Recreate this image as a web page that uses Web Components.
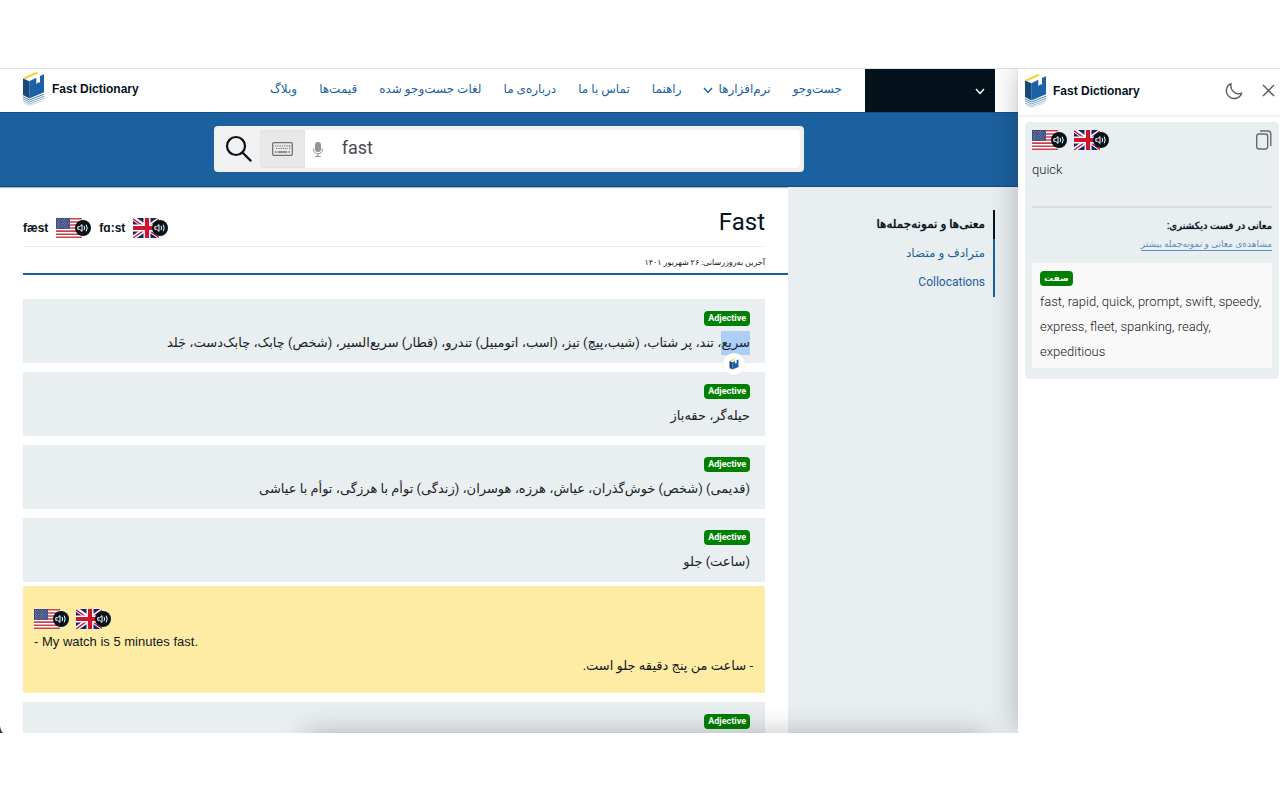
<!DOCTYPE html>
<html lang="fa">
<head>
<meta charset="utf-8">
<title>Fast Dictionary</title>
<style>
  body {
    margin: 0;
    box-sizing: border-box;
    height: 100vh;
    padding: 68px 0 67px;
    background: #fff;
    color: #06121c;
    font: 13px/24px Roboto, "DejaVu Sans", sans-serif;
  }
</style>
</head>
<body>
<dictionary-app>
  <site-header slot="header"></site-header>
  <search-bar slot="search" value="fast"></search-bar>

  <word-heading slot="article" word="Fast" us="fæst" uk="fɑ:st">آخرین به‌روزرسانی: ۲۶ شهریور ۱۴۰۱</word-heading>
  <meaning-card slot="article" kind="Adjective"><picked-text>سریع</picked-text>، تند، پر شتاب، (شیب،پیچ) تیز، (اسب، اتومبیل) تندرو، (قطار) سریع‌السیر، (شخص) چابک، چابک‌دست، جَلد</meaning-card>
  <meaning-card slot="article" kind="Adjective">حیله‌گر، حقه‌باز</meaning-card>
  <meaning-card slot="article" kind="Adjective">(قدیمی) (شخص) خوش‌گذران، عیاش، هرزه، هوسران، (زندگی) توأم با هرزگی، توأم با عیاشی</meaning-card>
  <meaning-card slot="article" kind="Adjective">(ساعت) جلو</meaning-card>
  <example-card slot="article">
    <span slot="en">- My watch is 5 minutes fast.</span>
    <span slot="fa">- ساعت من پنج دقیقه جلو است.</span>
  </example-card>
  <meaning-card slot="article" kind="Adjective"></meaning-card>

  <page-index slot="index"></page-index>
  <side-panel slot="panel">
    <span slot="word">quick</span>
    <span slot="meanings">fast, rapid, quick, prompt, swift, speedy, express, fleet, spanking, ready, expeditious</span>
  </side-panel>
</dictionary-app>

<script>
// small helper so every element attaches its shadow the same way
class BaseElement extends HTMLElement {
  constructor() {
    super();
    this.attachShadow({ mode: 'open' });
  }
  connectedCallback() {
    this.shadowRoot.innerHTML = this.render();
  }
}

// book logo
class BookLogo extends BaseElement {
  render() {
    return `
      <style>
        :host { display: block; width: 21px; flex: none; }
        svg { display: block; width: 100%; }
      </style>
      <svg viewBox="0 0 21 34" aria-hidden="true">
        <path fill="#f7cf1d" d="M0 6L13 0L15 1.2L2 7.2Z"/>
        <path fill="#174a7c" d="M0 6.6L6.4 9.2V26.4L0 23Z"/>
        <path fill="#1b61a4" d="M6.3 9.2L13.3 5.8V12.2L15.2 10.2L17 10.8V4L21 2.2V20.3L6.3 26.4Z"/>
        <g fill="none" stroke-width=".9">
          <path stroke="#2f6dab" d="M0 24.8L6.4 28L21 22.2"/>
          <path stroke="#5d8fc0" d="M0 26.8L6.4 30L21 24.3"/>
          <path stroke="#8fb1d3" d="M0 28.8L6.4 31.8L21 26.4"/>
          <path stroke="#c2d4e6" d="M1 31L6.4 33.4L20 28.6"/>
        </g>
      </svg>`;
  }
}

class FlagButton extends BaseElement {
  render() {
    const us = `
      <rect width="26" height="20" fill="#fff"/>
      <path stroke="#c9414c" stroke-width="1.55" d="M0 .8H26M0 3.9H26M0 6.95H26M0 10H26M0 13.1H26M0 16.2H26M0 19.2H26"/>
      <rect width="14" height="10.8" fill="#3c4a80"/>
      <g stroke="#a9b0cb" stroke-width=".8" stroke-dasharray=".8 1.6">
        <path d="M1 1.6H13.4M1 4.2H13.4M1 6.8H13.4M1 9.3H13.4"/>
        <path d="M2.2 2.9H12.6M2.2 5.5H12.6M2.2 8H12.6"/>
      </g>`;
    const uk = `
      <rect width="26" height="20" fill="#14246c"/>
      <path stroke="#fff" stroke-width="4.4" d="M0 0L28 20M28 0L0 20"/>
      <path stroke="#cf1430" stroke-width="1.4" d="M0 .8L28 20.8M28 0L0 20"/>
      <path stroke="#fff" stroke-width="7" d="M14 0V20M0 10H26"/>
      <path stroke="#cf1430" stroke-width="4.2" d="M14 0V20M0 10H26"/>`;
    const country = this.getAttribute('country');
    return `
      <style>
        :host { display: block; }
        button { display: block; padding: 0; border: 0; background: none; cursor: pointer; }
        svg { display: block; }
      </style>
      <button type="button" aria-label="${country.toUpperCase()}">
        <svg width="35" height="20" viewBox="0 0 35 20">
          <svg width="26" height="20">${country === 'us' ? us : uk}</svg>
          <circle cx="27" cy="10" r="8" fill="#06121c"/>
          <g fill="none" stroke="#fff" stroke-linecap="round" stroke-linejoin="round">
            <path d="M22.2 8.7H23.6L26 6.6V13.4L23.6 11.3H22.2Z"/>
            <path d="M28.2 8.2Q29.2 10 28.2 11.8M30.4 7Q32.2 10 30.4 13"/>
          </g>
        </svg>
      </button>`;
  }
}

class WordBadge extends BaseElement {
  render() {
    return `
      <style>
        :host {
          display: block;
          width: fit-content;
          padding: 0 4px;
          border-radius: 4px;
          background: #008000;
          color: #fff;
          font-size: 9px;
          font-weight: 700;
          line-height: 15px;
        }
      </style>
      <slot></slot>`;
  }
}

class SiteHeader extends BaseElement {
  render() {
    return `
      <style>
        :host {
          display: flex;
          align-items: stretch;
          height: 43px;
          padding: 0 23px;
          border-top: 1px solid #e3e4e5;
          background: #fff;
        }
        .brand {
          display: flex;
          align-items: center;
          gap: 8px;
          margin-right: auto;
          padding-bottom: 4px;
          font: 700 12px "Liberation Sans", sans-serif;
          color: #06121c;
          text-decoration: none;
        }
        nav {
          display: flex;
          align-items: center;
          gap: 22px;
          padding: 0 23px 3px;
          direction: rtl;
          font-size: 12px;
          white-space: nowrap;
        }
        nav a { color: #1b5f9e; text-decoration: none; }
        nav svg { margin-right: 5px; vertical-align: -1px; }
        .account {
          display: flex;
          align-items: center;
          justify-content: flex-end;
          width: 130px;
          padding: 2px 10px 0;
          border: 0;
          background: #04121c;
        }
      </style>
      <a class="brand" href="#"><book-logo></book-logo>Fast Dictionary</a>
      <nav>
        <a href="#">جست‌وجو</a>
        <a href="#">نرم‌افزارها<svg width="10" height="7" viewBox="0 0 10 7" fill="none" stroke="#1b5f9e" stroke-width="1.4"><path d="M1 1L5 5.4L9 1"/></svg></a>
        <a href="#">راهنما</a>
        <a href="#">تماس با ما</a>
        <a href="#">درباره‌ی ما</a>
        <a href="#">لغات جست‌وجو شده</a>
        <a href="#">قیمت‌ها</a>
        <a href="#">وبلاگ</a>
      </nav>
      <button class="account" type="button" aria-label="حساب">
        <svg width="10" height="7" viewBox="0 0 10 7" fill="none" stroke="#fff" stroke-width="1.4"><path d="M1 1L5 5.4L9 1"/></svg>
      </button>`;
  }
}

class SearchBar extends BaseElement {
  render() {
    return `
      <style>
        :host {
          display: flex;
          justify-content: center;
          padding: 13px 0 14px;
          background: #1b609f;
          border-top: 1px solid #164f8a;
          border-bottom: 1px solid #0f4c89;
          box-shadow: 0 1px 1px #9fbbd6;
        }
        form {
          display: flex;
          box-sizing: border-box;
          width: 58%;
          height: 46px;
          padding: 4px;
          border-radius: 4px;
          background: #f1f1f1;
        }
        button {
          display: flex;
          align-items: center;
          justify-content: center;
          padding: 0;
          border: 0;
          background: none;
        }
        .go { width: 42px; padding-left: 1px; }
        .keys {
          width: 45px;
          border: 1px solid #e2e2e2;
          border-radius: 4px 0 0 4px;
          background: #e8e8e8;
          box-sizing: border-box;
        }
        .field {
          display: flex;
          flex: 1;
          background: #fff;
          border-radius: 0 4px 4px 0;
        }
        .mic { width: 26px; }
        input {
          flex: 1;
          min-width: 0;
          padding: 0 11px 3px;
          border: 0;
          outline: 0;
          background: none;
          color: #484b4e;
          font: 18px Roboto, "DejaVu Sans", sans-serif;
        }
      </style>
      <form>
        <button class="go" type="button" aria-label="جست‌وجو">
          <svg width="28" height="28" viewBox="0 0 28 28" fill="none" stroke="#06121c" stroke-width="2.2" stroke-linecap="round"><circle cx="11" cy="11" r="9"/><path d="M17.5 17.5L25.6 25.6"/></svg>
        </button>
        <button class="keys" type="button" aria-label="صفحه کلید">
          <svg width="21" height="14" viewBox="0 0 21 14" fill="none" stroke="#737373"><rect x=".7" y=".7" width="19.6" height="12.6" rx="1" stroke-width="1.3"/><path stroke-dasharray="1.3 1" d="M3 4H18"/><path stroke-dasharray="1.3 1" d="M4 6.5H16M17.8 3.5V7.5"/><path d="M3 10H4.5M5.6 10H15.2M16.5 10H18" stroke-width="1.3"/></svg>
        </button>
        <div class="field">
          <button class="mic" type="button" aria-label="میکروفون">
            <svg width="10" height="15" viewBox="0 0 10 15" fill="none" stroke="#929292"><rect x="2" y="0" width="6" height="10" rx="3" fill="#929292" stroke="none"/><path d="M.6 6.5V8C.6 13 9.4 13 9.4 8V6.5M5 11.5V14.4M2 14.4H8"/></svg>
          </button>
          <input type="text" aria-label="fast" value="${this.getAttribute('value')}">
        </div>
      </form>`;
  }
}

class WordHeading extends BaseElement {
  render() {
    return `
      <style>
        :host {
          display: block;
          margin-bottom: 24px;
          border-bottom: 2px solid #1b5f9e;
        }
        .top {
          display: flex;
          align-items: center;
          gap: 8px;
          height: 60px;
          margin-right: 23px;
          border-bottom: 1px solid #eceeef;
          font: 700 12px "Liberation Sans", sans-serif;
          box-sizing: border-box;
        }
        .sound { display: flex; align-items: center; gap: 8px; padding-top: 22px; }
        h1 {
          margin: 0 0 0 auto;
          padding-top: 11px;
          font: 400 24px/32px Roboto, sans-serif;
        }
        p {
          margin: 0 23px 0 0;
          padding: 5px 0 0;
          direction: rtl;
          font-size: 8px;
          line-height: 21px;
        }
      </style>
      <div class="top">
        <div class="sound">${this.getAttribute('us')}<flag-button country="us"></flag-button></div>
        <div class="sound">${this.getAttribute('uk')}<flag-button country="uk"></flag-button></div>
        <h1>${this.getAttribute('word')}</h1>
      </div>
      <p><slot></slot></p>`;
  }
}

class MeaningCard extends BaseElement {
  render() {
    return `
      <style>
        :host {
          display: block;
          box-sizing: border-box;
          min-height: 64px;
          margin: 0 23px 9px 0;
          padding: 12px 15px 8px;
          background: #e9eef1;
          direction: rtl;
          font-size: 13px;
          color: #1c2226;
        }
        p { margin: 5px 0 0; line-height: 24px; }
      </style>
      <word-badge>${this.getAttribute('kind')}</word-badge>
      <p><slot></slot></p>`;
  }
}

// selected word with the floating lookup bubble under it
class PickedText extends BaseElement {
  render() {
    return `
      <style>
        :host { position: relative; display: inline-block; background: #accef7; }
        button {
          position: absolute;
          top: 22px;
          left: 2px;
          display: flex;
          align-items: center;
          justify-content: center;
          width: 22px;
          height: 22px;
          padding: 0;
          border: 0;
          border-radius: 50%;
          background: #fff;
          box-shadow: 0 0 2px rgba(0, 0, 0, .12);
        }
      </style>
      <slot></slot><button type="button" aria-label="Fast Dictionary"><svg width="10" height="12" viewBox="0 0 10 12"><path fill="#f2d24c" d="M.5 2.6L6 .2L7 .8L1.5 3.2Z"/><path fill="#174a7c" d="M.5 3L3.4 4.2V11.6L.5 10Z"/><path fill="#1b61a4" d="M3.4 4.2L6 3V5.6L7.6 5V2.2L9.5 1.2V9L3.4 11.6Z"/></svg></button>`;
  }
}

class ExampleCard extends BaseElement {
  render() {
    return `
      <style>
        :host {
          display: block;
          margin: -5px 23px 9px 0;
          padding: 23px 12px 16px 11px;
          background: #feeca5;
          color: #14181b;
        }
        .flags { display: flex; gap: 7px; }
        p { margin: 0; }
        .en { padding-top: 1px; font-family: "Liberation Sans", sans-serif; }
        .fa { direction: rtl; line-height: 23px; }
      </style>
      <div class="flags"><flag-button country="us"></flag-button><flag-button country="uk"></flag-button></div>
      <p class="en"><slot name="en"></slot></p>
      <p class="fa"><slot name="fa"></slot></p>`;
  }
}

class PageIndex extends BaseElement {
  render() {
    return `
      <style>
        :host { display: block; direction: rtl; }
        a {
          display: block;
          padding-right: 8px;
          border-right: 2px solid #1b5f9e;
          color: #1b5f9e;
          font-size: 12px;
          line-height: 29px;
          text-decoration: none;
        }
        .active { border-color: #06121c; color: #06121c; text-shadow: 0 0 1px #06121c; }
      </style>
      <a class="active" href="#">معنی‌ها و نمونه‌جمله‌ها</a>
      <a href="#">مترادف و متضاد</a>
      <a href="#">Collocations</a>`;
  }
}

class SidePanel extends BaseElement {
  render() {
    return `
      <style>
        :host { display: block; }
        header {
          display: flex;
          align-items: center;
          gap: 7px;
          box-sizing: border-box;
          height: 47px;
          padding: 0 5px 3px 7px;
          border-top: 1px solid #e3e4e5;
          box-shadow: 0 1px 3px rgba(0, 0, 0, .1);
          font: 700 12px "Liberation Sans", sans-serif;
        }
        header span { margin-right: auto; }
        button { display: flex; padding: 0; border: 0; background: none; }
        .moon { margin-right: 12px; }
        .card {
          margin: 7px 1px 0 7px;
          padding: 8px 7px 11px;
          border-radius: 4px;
          background: #e9eef1;
        }
        .flags { display: flex; gap: 7px; }
        .copy { margin-left: auto; }
        .word {
          margin: 0;
          padding: 8px 0 24px;
          border-bottom: 2px solid #dadcde;
          color: #15191c;
          font-weight: 300;
        }
        .more { direction: rtl; padding: 6px 0 12px; }
        h2 {
          margin: 0;
          font-size: 10px;
          font-weight: 400;
          line-height: 24px;
          text-shadow: 0 0 1px #06121c;
        }
        .more a {
          display: block;
          width: fit-content;
          border-bottom: 1px solid #5b8fc1;
          color: #5b8fc1;
          font-size: 9px;
          line-height: 12px;
          text-decoration: none;
        }
        .box { padding: 8px 8px 4px; background: #f9f9f9; }
        .box p { margin: 3px 0 0; color: #15191c; font-weight: 300; line-height: 25px; }
      </style>
      <header>
        <book-logo></book-logo>
        <span>Fast Dictionary</span>
        <button class="moon" type="button" aria-label="Dark mode"><svg width="18" height="18" viewBox="0 0 18 18" fill="none" stroke="#55595d" stroke-width="1.4" stroke-linejoin="round"><path d="M6 1.6A7.8 7.8 0 1 0 16.6 11.2C10.6 13.6 4.6 8 6 1.6Z"/></svg></button>
        <button type="button" aria-label="Close"><svg width="13" height="13" viewBox="0 0 13 13" stroke="#55595d" stroke-width="1.4"><path d="M1 1L12 12M12 1L1 12"/></svg></button>
      </header>
      <div class="card">
        <div class="flags">
          <flag-button country="us"></flag-button>
          <flag-button country="uk"></flag-button>
          <button class="copy" type="button" aria-label="Copy"><svg width="17" height="20" viewBox="0 0 17 20" fill="none" stroke="#666a6d" stroke-width="1.4"><rect x="1.7" y="4" width="11" height="15" rx="2.4"/><path d="M5 1H13Q15.8 1 15.8 3.8V16"/></svg></button>
        </div>
        <p class="word"><slot name="word"></slot></p>
        <div class="more">
          <h2>معانی در فست دیکشنری:</h2>
          <a href="#">مشاهده‌ی معانی و نمونه‌جمله بیشتر</a>
        </div>
        <div class="box">
          <word-badge>صفت</word-badge>
          <p><slot name="meanings"></slot></p>
        </div>
      </div>`;
  }
}

class DictionaryApp extends BaseElement {
  render() {
    return `
      <style>
        :host { position: relative; display: flex; height: 100%; overflow: hidden; }
        .site { position: relative; display: flex; flex: 1; flex-direction: column; min-width: 0; }
        .columns { display: flex; flex: 1; min-height: 0; }
        main { flex: 1; min-width: 0; padding-left: 23px; overflow: hidden; }
        aside {
          box-sizing: border-box;
          width: 230px;
          padding: 23px 23px 0;
          background: #e9eef1;
        }
        .panel {
          position: relative;
          width: 262px;
          background: #fff;
          box-shadow: 0 0 28px rgba(0, 0, 0, .25);
        }
        /* shadow cast up from below the fold */
        .dock {
          position: absolute;
          left: 30%;
          right: 3%;
          top: 100%;
          height: 40px;
          box-shadow: 0 0 28px rgba(0, 0, 0, .25);
        }
        .corner { position: absolute; left: 0; bottom: 0; }
      </style>
      <div class="site">
        <slot name="header"></slot>
        <slot name="search"></slot>
        <div class="columns">
          <main><slot name="article"></slot></main>
          <aside><slot name="index"></slot></aside>
        </div>
        <div class="dock"></div>
        <svg class="corner" width="3" height="7" viewBox="0 0 3 7"><path fill="#333" d="M0 0Q.6 5 3 7H0Z"/></svg>
      </div>
      <div class="panel"><slot name="panel"></slot></div>`;
  }
}

customElements.define('book-logo', BookLogo);
customElements.define('flag-button', FlagButton);
customElements.define('word-badge', WordBadge);
customElements.define('site-header', SiteHeader);
customElements.define('search-bar', SearchBar);
customElements.define('word-heading', WordHeading);
customElements.define('meaning-card', MeaningCard);
customElements.define('picked-text', PickedText);
customElements.define('example-card', ExampleCard);
customElements.define('page-index', PageIndex);
customElements.define('side-panel', SidePanel);
customElements.define('dictionary-app', DictionaryApp);
</script>
</body>
</html>
